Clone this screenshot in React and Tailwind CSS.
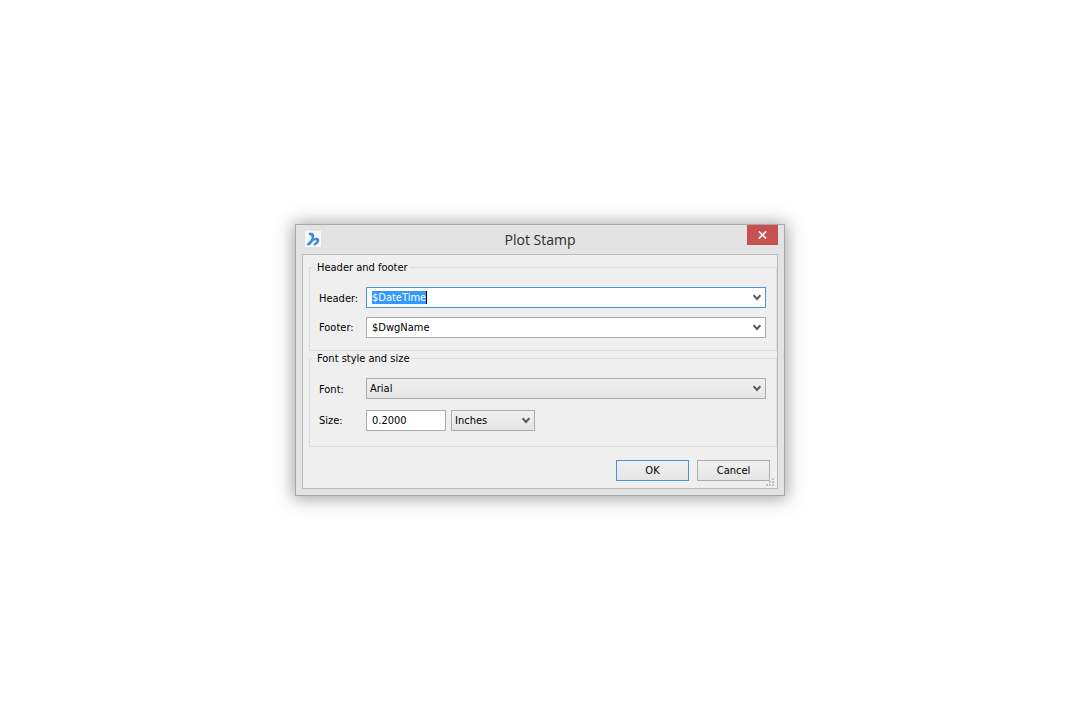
import React, { useEffect, useRef, useState } from "react";

const Chevron = () => (
  <svg
    className="pointer-events-none w-2 h-[7px] shrink-0"
    viewBox="0 0 8 7"
    fill="none"
    stroke="#585858"
    strokeWidth="2"
  >
    <path d="M0.6 1.3 L4 5 L7.4 1.3" />
  </svg>
);

const Logo = () => (
  <svg className="w-4 h-4 bg-[#f6f9fd]" viewBox="0 0 16 16" fill="#3f86e0">
    <path d="M3.6 1.8 H6.4 C8.2 1.8 9.4 3.2 9.2 5.2 C9.1 6 8.9 6.7 8.6 7.4 C9.6 6.8 10.8 6.5 12 6.7 C14 7 14.8 8.8 14 10.6 C13.3 12.2 12 13.5 10.6 14.3 H8 L10 11.7 C11 11.2 11.6 10.5 11.5 9.8 C11.3 8.9 9.6 9 8.2 9.9 L4.9 14.3 H1.2 L3.4 11.3 C5.2 10.4 6.4 8.2 6.6 6.2 C6.7 5 6.2 4.3 5.2 4.2 H4.3 Z" />
  </svg>
);

const SelectBox = ({ id, label, options, className }) => (
  <div
    className={`relative flex items-center h-[21px] border border-[#acacac] bg-linear-to-b from-[#f0f0f0] to-[#e5e5e5] ${className}`}
  >
    <select
      id={id}
      aria-label={label}
      className="appearance-none w-full h-full pl-[3px] pr-4 outline-none"
    >
      {options.map((option) => (
        <option key={option}>{option}</option>
      ))}
    </select>
    <span className="absolute right-1 pointer-events-none">
      <Chevron />
    </span>
  </div>
);

const App = () => {
  const headerRef = useRef(null);
  const [header, setHeader] = useState("$DateTime");
  const [footer, setFooter] = useState("$DwgName");
  const [size, setSize] = useState("0.2000");

  useEffect(() => {
    headerRef.current.focus();
    headerRef.current.select();
  }, []);

  return (
    <div className="min-h-screen flex items-center justify-center bg-white text-black text-[11px] leading-[15px] font-['DejaVu_Sans_Condensed','DejaVu_Sans',sans-serif]">
      <div className="w-full max-w-[490px] border border-[#a8a8a8] bg-[#e3e3e3] px-1.5 pb-1.5 shadow-[0_1px_16px_2px_rgba(0,0,0,0.36)]">
        <header className="grid grid-cols-[1fr_auto_1fr] items-start h-[29px]">
          <div className="pt-1.5 pl-[3px]">
            <Logo />
          </div>
          <h1 className="pt-[5px] text-sm leading-5 text-[#2b2b2b] font-['Open_Sans',sans-serif]">
            Plot Stamp
          </h1>
          <button
            type="button"
            aria-label="Close"
            className="justify-self-end flex items-center justify-center w-[31px] h-5 bg-[#c75050]"
          >
            <svg className="w-[9px] h-2" viewBox="0 0 9 8" stroke="white" strokeWidth="1.6">
              <path d="M0.8 0.5 L8.2 7.5 M8.2 0.5 L0.8 7.5" />
            </svg>
          </button>
        </header>

        <form
          onSubmit={(e) => e.preventDefault()}
          className="relative border border-[#bcbcbc] bg-[#efefef] pt-[5px] pl-1.5 pb-[7px]"
        >
          <fieldset className="border border-[#dcdcdc] pl-[5px] pr-2.5 pb-3">
            <legend className="px-0.5">Header and footer</legend>
            <div className="grid grid-cols-[47px_1fr] items-center gap-y-[9px] pt-3 pl-1">
              <label htmlFor="header" className="pt-0.5">
                Header:
              </label>
              <div className="flex items-center h-[21px] border border-[#4a93dc] bg-white pl-[5px] pr-1">
                <input
                  id="header"
                  ref={headerRef}
                  value={header}
                  onChange={(e) => setHeader(e.target.value)}
                  className="[field-sizing:content] h-[13px] leading-[13px] outline-none selection:bg-[#3399ff] selection:text-white"
                />
                <span className="w-px h-[13px] bg-black" />
                <button type="button" aria-label="Show headers" className="ml-auto">
                  <Chevron />
                </button>
              </div>
              <label htmlFor="footer">Footer:</label>
              <div className="flex items-center h-[21px] border border-[#acacac] bg-white pl-[5px] pr-1">
                <input
                  id="footer"
                  value={footer}
                  onChange={(e) => setFooter(e.target.value)}
                  className="grow h-[15px] outline-none"
                />
                <button type="button" aria-label="Show footers">
                  <Chevron />
                </button>
              </div>
            </div>
          </fieldset>

          <fieldset className="border border-[#dcdcdc] pl-[5px] pr-2.5 pb-[15px]">
            <legend className="px-0.5">Font style and size</legend>
            <div className="grid grid-cols-[47px_1fr] items-center gap-y-[11px] pt-3 pl-1">
              <label htmlFor="font" className="pt-0.5">
                Font:
              </label>
              <SelectBox id="font" options={["Arial"]} className="w-full" />
              <label htmlFor="size">Size:</label>
              <div className="flex gap-[5px]">
                <input
                  id="size"
                  value={size}
                  onChange={(e) => setSize(e.target.value)}
                  className="w-20 h-[21px] border border-[#acacac] bg-white px-[5px] outline-none"
                />
                <SelectBox
                  id="unit"
                  label="Unit"
                  options={["Inches", "Millimeters"]}
                  className="w-[84px]"
                />
              </div>
            </div>
          </fieldset>

          <div className="flex justify-end gap-2 pt-[13px] pr-[7px]">
            <button
              type="submit"
              className="w-[73px] h-[21px] border border-[#4a93dc] bg-linear-to-b from-[#f0f0f0] to-[#e5e5e5]"
            >
              OK
            </button>
            <button
              type="button"
              className="w-[73px] h-[21px] border border-[#acacac] bg-linear-to-b from-[#f0f0f0] to-[#e5e5e5]"
            >
              Cancel
            </button>
          </div>

          {/* Resize grip */}
          <svg
            className="absolute right-[3px] bottom-0.5 w-2 h-2"
            viewBox="0 0 8 8"
            fill="#bfbfbf"
          >
            <path d="M6 0h2v2h-2z M3 3h2v2h-2z M6 3h2v2h-2z M0 6h2v2h-2z M3 6h2v2h-2z M6 6h2v2h-2z" />
          </svg>
        </form>
      </div>
    </div>
  );
};

export default App;
